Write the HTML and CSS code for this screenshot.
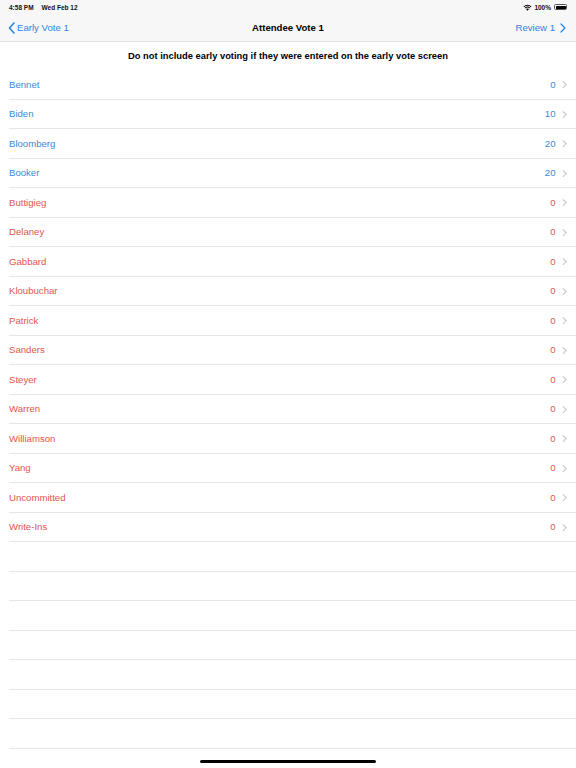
FILE: index.html
```html
<!DOCTYPE html>
<html>
<head>
<meta charset="utf-8">
<link rel="stylesheet" href="styles.css">
</head>
<body>
<div class="top">
  <div class="status">
    <div class="status-left"><span>4:58 PM</span><span>Wed Feb 12</span></div>
    <div class="status-right">
      <svg class="wifi" width="9" height="7" viewBox="0 0 18 14"><path d="M9 13.5 L6 10.2 A4.5 4.5 0 0 1 12 10.2 Z" fill="#000"/><path d="M3.6 7.6 A7.8 7.8 0 0 1 14.4 7.6 L13 9.1 A5.8 5.8 0 0 0 5 9.1 Z" fill="#000"/><path d="M1 4.8 A11.5 11.5 0 0 1 17 4.8 L15.6 6.3 A9.5 9.5 0 0 0 2.4 6.3 Z" fill="#000"/></svg>
      <span>100%</span>
      <span class="battery"><span class="battery-fill"></span></span>
    </div>
  </div>
  <div class="nav">
    <div class="nav-left">
      <svg width="7" height="12" viewBox="0 0 7 12"><path d="M6 1 L1.5 6 L6 11" fill="none" stroke="#2b86e4" stroke-width="1.6" stroke-linecap="round" stroke-linejoin="round"/></svg>
      <span>Early Vote 1</span>
    </div>
    <div class="nav-title">Attendee Vote 1</div>
    <div class="nav-right">
      <span>Review 1</span>
      <svg width="6" height="10" viewBox="0 0 6 10"><path d="M1 1 L5 5 L1 9" fill="none" stroke="#2b86e4" stroke-width="1.3" stroke-linecap="round" stroke-linejoin="round"/></svg>
    </div>
  </div>
</div>
<div class="header">Do not include early voting if they were entered on the early vote screen</div>
<div class="list">
  <div class="row blue"><span class="name">Bennet</span><span class="val">0</span><span class="chev"></span></div>
  <div class="row blue"><span class="name">Biden</span><span class="val">10</span><span class="chev"></span></div>
  <div class="row blue"><span class="name">Bloomberg</span><span class="val">20</span><span class="chev"></span></div>
  <div class="row blue"><span class="name">Booker</span><span class="val">20</span><span class="chev"></span></div>
  <div class="row red"><span class="name">Buttigieg</span><span class="val">0</span><span class="chev"></span></div>
  <div class="row red"><span class="name">Delaney</span><span class="val">0</span><span class="chev"></span></div>
  <div class="row red"><span class="name">Gabbard</span><span class="val">0</span><span class="chev"></span></div>
  <div class="row red"><span class="name">Kloubuchar</span><span class="val">0</span><span class="chev"></span></div>
  <div class="row red"><span class="name">Patrick</span><span class="val">0</span><span class="chev"></span></div>
  <div class="row red"><span class="name">Sanders</span><span class="val">0</span><span class="chev"></span></div>
  <div class="row red"><span class="name">Steyer</span><span class="val">0</span><span class="chev"></span></div>
  <div class="row red"><span class="name">Warren</span><span class="val">0</span><span class="chev"></span></div>
  <div class="row red"><span class="name">Williamson</span><span class="val">0</span><span class="chev"></span></div>
  <div class="row red"><span class="name">Yang</span><span class="val">0</span><span class="chev"></span></div>
  <div class="row red"><span class="name">Uncommitted</span><span class="val">0</span><span class="chev"></span></div>
  <div class="row red"><span class="name">Write-Ins</span><span class="val">0</span><span class="chev"></span></div>
  <div class="row empty"></div>
  <div class="row empty"></div>
  <div class="row empty"></div>
  <div class="row empty"></div>
  <div class="row empty"></div>
  <div class="row empty"></div>
  <div class="row empty"></div>
</div>
<div class="home-indicator"></div>
</body>
</html>
```
FILE: styles.css
```css
* { box-sizing: border-box; }
html, body {
  margin: 0;
  padding: 0;
  width: 576px;
  height: 768px;
  overflow: hidden;
  background: #ffffff;
  font-family: "Liberation Sans", Arial, sans-serif;
  position: relative;
}
.top {
  background: #f7f7f7;
  border-bottom: 1px solid #e2e2e4;
  height: 42px;
}
.status {
  height: 14px;
  display: flex;
  justify-content: space-between;
  align-items: center;
  padding: 0 9px 0 9px;
  font-size: 6.5px;
  font-weight: bold;
  color: #111;
}
.status-left { display: flex; gap: 8px; }
.status-right { display: flex; align-items: center; gap: 2px; }
.battery {
  width: 13px;
  height: 6px;
  border: 0.5px solid #555;
  border-radius: 1.5px;
  padding: 0.5px;
  margin-left: 1px;
  display: inline-flex;
}
.battery-fill { flex: 1; background: #000; border-radius: 0.5px; }
.nav {
  height: 27px;
  display: flex;
  align-items: center;
  justify-content: space-between;
  padding: 0 10px 0 8px;
  font-size: 9.6px;
  position: relative;
}
.nav-left, .nav-right {
  display: flex;
  align-items: center;
  gap: 2px;
  color: #2b86e4;
}
.nav-right { gap: 5px; }
.nav-title {
  position: absolute;
  left: 0;
  right: 0;
  text-align: center;
  font-weight: bold;
  color: #000;
  pointer-events: none;
}
.header {
  height: 28px;
  display: flex;
  align-items: center;
  justify-content: center;
  font-size: 9.35px;
  font-weight: bold;
  color: #000;
}
.list { padding-left: 9px; }
.row {
  height: 29.5px;
  border-bottom: 1px solid #e6e6e8;
  display: flex;
  align-items: center;
  padding-right: 9px;
  font-size: 9.6px;
}
.row .name { flex: 1; }
.row .val { margin-right: 5px; }
.blue { color: #3a8ad9; }
.red { color: #e0554d; }
.chev {
  width: 4.5px;
  height: 4.5px;
  border-top: 1px solid #c4c4c8;
  border-right: 1px solid #c4c4c8;
  transform: rotate(45deg);
  margin-right: 2px;
}
.home-indicator {
  position: absolute;
  left: 200px;
  width: 176px;
  bottom: 5px;
  height: 3px;
  border-radius: 2px;
  background: #000;
}
```
